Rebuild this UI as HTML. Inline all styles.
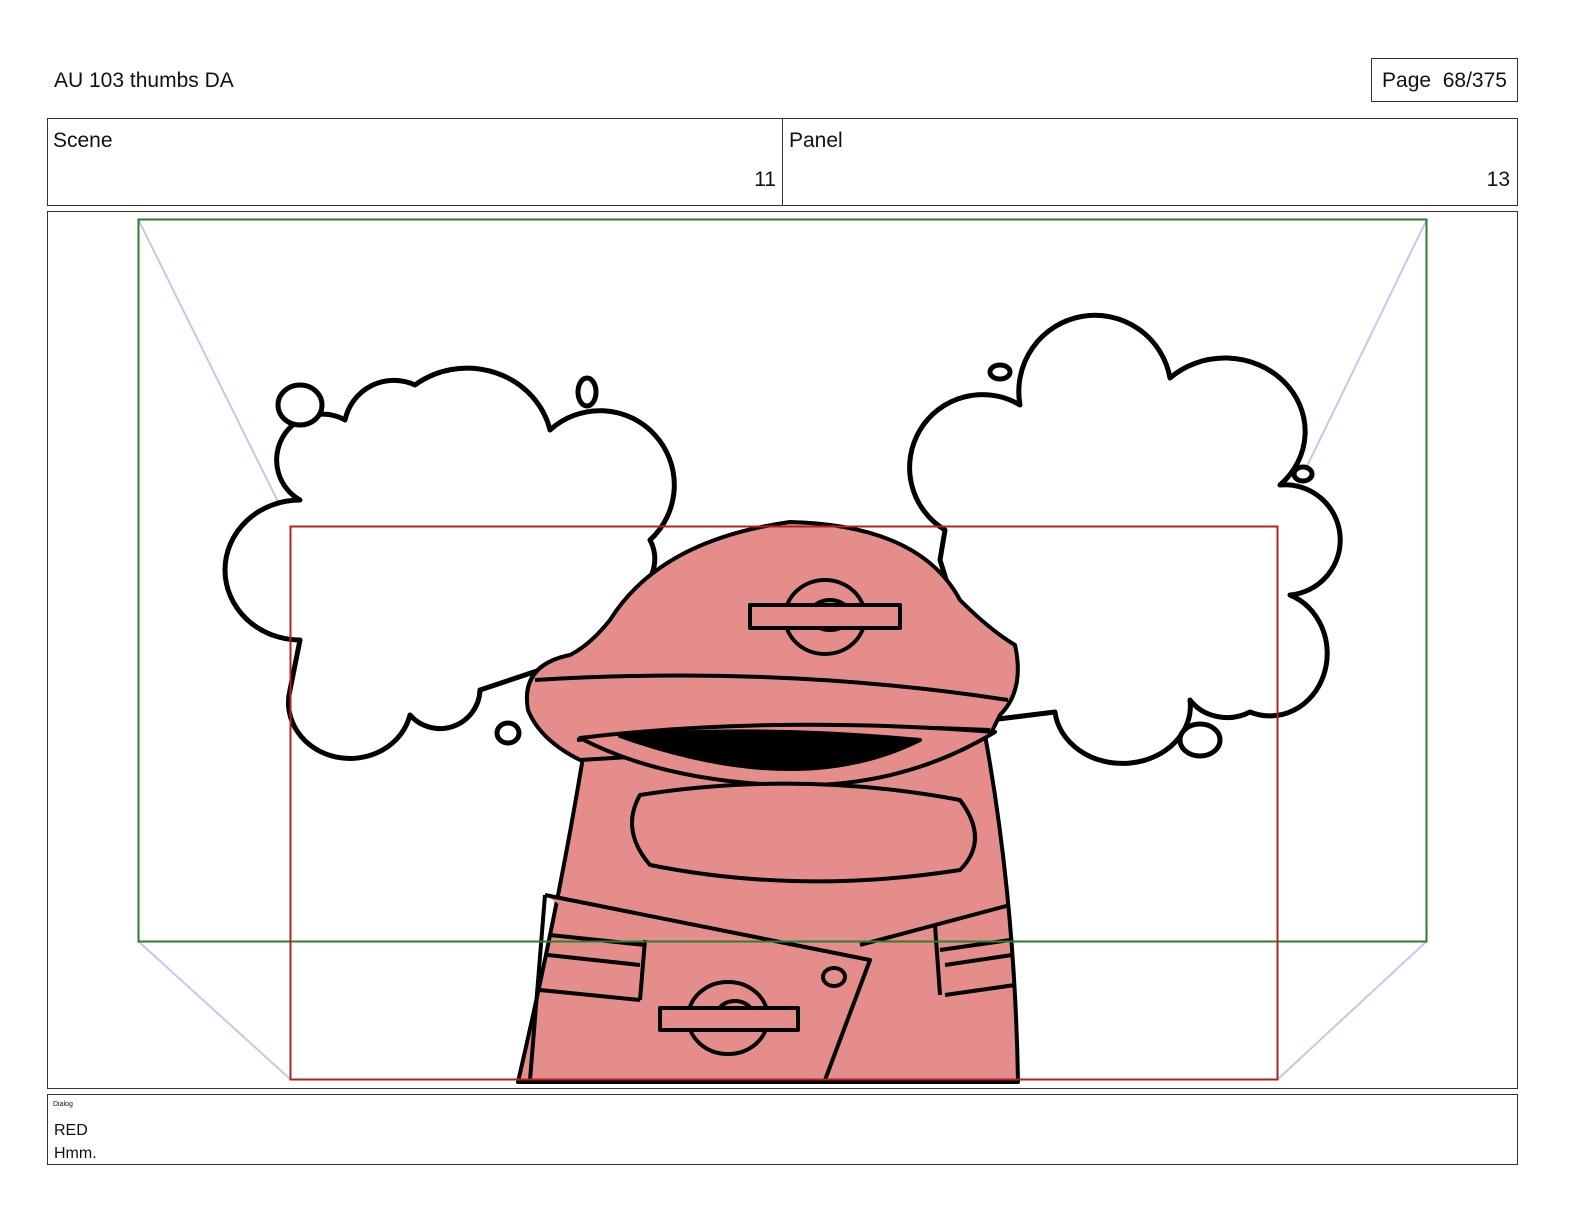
<!DOCTYPE html>
<html><head><meta charset="utf-8"><style>
html,body{margin:0;width:1584px;height:1224px;background:#fff;font-family:"Liberation Sans",sans-serif;position:relative;overflow:hidden;color:#111}
.a{position:absolute}
</style></head><body>
<div class="a" style="left:54px;top:69px;font-size:21px">AU 103 thumbs DA</div>
<div class="a" style="left:1371px;top:58px;width:147px;height:44px;border:1px solid #333;box-sizing:border-box;font-size:21px;line-height:44px;text-align:center">Page&nbsp; 68/375</div>
<div class="a" style="left:47px;top:118px;width:1471px;height:88px;border:1px solid #333;box-sizing:border-box"></div>
<div class="a" style="left:782px;top:118px;width:1px;height:88px;background:#333"></div>
<div class="a" style="left:53px;top:129px;font-size:21px">Scene</div>
<div class="a" style="left:789px;top:129px;font-size:21px">Panel</div>
<div class="a" style="left:740px;top:168px;width:36px;text-align:right;font-size:21px">11</div>
<div class="a" style="left:1470px;top:168px;width:40px;text-align:right;font-size:21px">13</div>
<div class="a" style="left:47px;top:211px;width:1471px;height:878px;border:1px solid #333;box-sizing:border-box"></div>
<svg class="a" style="left:0;top:0" width="1584" height="1224" viewBox="0 0 1584 1224">
<g stroke="#c8c6ee" stroke-width="2"><line x1="138" y1="219" x2="290" y2="526"/><line x1="1427" y1="219" x2="1278" y2="526"/><line x1="138" y1="941" x2="290" y2="1079"/><line x1="1427" y1="941" x2="1278" y2="1079"/></g>
<g fill="#fff" stroke="#000" stroke-width="5" stroke-linejoin="round">
<path d="M300,640 A75,70 0 0 1 300,500 A45,45 0 0 1 345,420 A50,50 0 0 1 415,385 A85,80 0 0 1 550,430 A60,60 0 0 1 650,540 A40,40 0 0 1 640,590 L600,650 L480,690 A40,40 0 0 1 410,715 A55,50 0 0 1 290,690 Z"/>
<path d="M945,530 A60,60 0 0 1 1020,405 A75,75 0 0 1 1170,378 A60,55 0 0 1 1280,485 A55,55 0 0 1 1290,595 A55,60 0 0 1 1250,712 A45,40 0 0 1 1190,700 A65,55 0 0 1 1055,712 L990,720 L940,560 Z"/>
<ellipse cx="300" cy="405" rx="22" ry="20"/><ellipse cx="587" cy="392" rx="9" ry="14"/><ellipse cx="508" cy="733" rx="11" ry="10"/><ellipse cx="1000" cy="372" rx="10" ry="7"/><ellipse cx="1303" cy="474" rx="9" ry="7"/><ellipse cx="1200" cy="740" rx="20" ry="16"/>
</g>
<g fill="#e58d8b" stroke="#000" stroke-width="4" stroke-linejoin="round">
<path d="M585,745 Q560,900 518,1082 L1018,1082 Q1015,900 985,735 Z"/>
<path d="M528,710 Q520,665 570,655 Q590,645 610,620 Q660,540 790,522 Q920,525 960,600 Q990,630 1015,645 Q1025,690 1000,715 L990,735 L580,760 Q540,740 528,710 Z"/>
<path d="M535,680 Q780,665 1008,700 M577,740 Q770,720 990,730"/>
<path d="M580,738 Q770,715 995,732 Q900,790 780,785 Q660,780 580,738 Z" fill="#e58d8b"/>
<path d="M620,736 Q760,725 920,740 Q800,800 620,736 Z" fill="#000"/>
<path d="M640,795 Q800,770 960,800 Q990,840 960,870 Q800,895 650,865 Q620,830 640,795 Z"/>
<path d="M545,895 L870,960 L825,1080 M545,895 L530,1080 M1010,905 L860,945"/>
<path d="M550,935 L645,945 M548,955 L640,965 M540,990 L640,1000 M940,950 L1010,940 M945,965 L1012,955 M945,995 L1015,985 M645,940 L640,1000 M935,925 L940,995"/>
<ellipse cx="825" cy="617" rx="40" ry="37"/><ellipse cx="830" cy="615" rx="20" ry="15"/>
<rect x="750" y="605" width="150" height="23"/>
<ellipse cx="728" cy="1018" rx="40" ry="36"/><ellipse cx="735" cy="1015" rx="18" ry="14"/>
<rect x="660" y="1008" width="138" height="22"/>
<ellipse cx="834" cy="977" rx="11" ry="9"/>
</g>
<rect x="138.5" y="219.5" width="1288" height="722" fill="none" stroke="#2e7d2e" stroke-width="2"/>
<rect x="290.5" y="526.5" width="987" height="553" fill="none" stroke="#b22222" stroke-width="2"/>
</svg>
<div class="a" style="left:47px;top:1094px;width:1471px;height:71px;border:1px solid #333;box-sizing:border-box"></div>
<div class="a" style="left:53px;top:1101px;font-size:7px">Dialog</div>
<div class="a" style="left:54px;top:1119px;font-size:16px;line-height:23px">RED<br>Hmm.</div>
</body></html>
